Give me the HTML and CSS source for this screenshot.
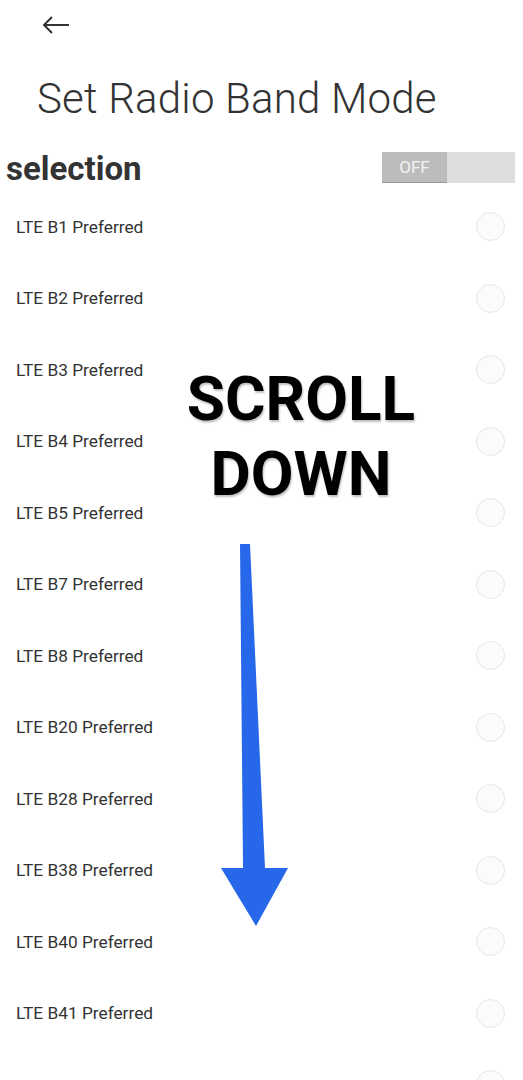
FILE: index.html
```html
<!DOCTYPE html>
<html>
<head>
<meta charset="utf-8">
<link rel="stylesheet" href="styles.css">
</head>
<body>
<div class="screen">
  <header class="topbar">
    <svg class="back" width="30" height="20" viewBox="0 0 30 20"><path d="M28 10H3M11 2L3 10l8 8" fill="none" stroke="#333" stroke-width="2"/></svg>
  </header>
  <h1 class="title">Set Radio Band Mode</h1>
  <div class="selrow">
    <span class="sel">selection</span>
    <div class="toggle"><span class="off">OFF</span><span class="rest"></span></div>
  </div>
  <ul class="list">
    <li class="row"><span>LTE B1 Preferred</span><i class="radio"></i></li>
    <li class="row"><span>LTE B2 Preferred</span><i class="radio"></i></li>
    <li class="row"><span>LTE B3 Preferred</span><i class="radio"></i></li>
    <li class="row"><span>LTE B4 Preferred</span><i class="radio"></i></li>
    <li class="row"><span>LTE B5 Preferred</span><i class="radio"></i></li>
    <li class="row"><span>LTE B7 Preferred</span><i class="radio"></i></li>
    <li class="row"><span>LTE B8 Preferred</span><i class="radio"></i></li>
    <li class="row"><span>LTE B20 Preferred</span><i class="radio"></i></li>
    <li class="row"><span>LTE B28 Preferred</span><i class="radio"></i></li>
    <li class="row"><span>LTE B38 Preferred</span><i class="radio"></i></li>
    <li class="row"><span>LTE B40 Preferred</span><i class="radio"></i></li>
    <li class="row"><span>LTE B41 Preferred</span><i class="radio"></i></li>
    <li class="row"><span></span><i class="radio"></i></li>
  </ul>
  <div class="scroll">SCROLL<br>DOWN</div>
  <svg class="arrow" width="523" height="1080" viewBox="0 0 523 1080"><path d="M240 544L250 544L265 868L288 868L256 926L221 868L243 868Z" fill="#2767e9"/></svg>
</div>
</body>
</html>
```
FILE: styles.css
```css
html, body { margin: 0; padding: 0; background: #fff; }
.screen { position: relative; width: 523px; height: 1080px; overflow: hidden; font-family: Roboto, "Noto Sans", sans-serif; color: #333; }
.topbar { height: 50px; display: flex; align-items: center; padding-left: 41px; }
.back { display: block; }
.title { margin: 19px 0 0 37px; font-size: 42px; font-weight: 300; line-height: 60px; color: #333; letter-spacing: 0.2px; }
.selrow { height: 46px; display: flex; align-items: center; justify-content: space-between; padding: 0 8px 0 6px; margin-top: 16px; }
.sel { font-size: 33px; font-weight: 700; color: #333; }
.toggle { display: flex; width: 133px; height: 31px; background: #dedede; margin-top: -2px; }
.off { width: 65px; background: #bcbcbc; color: #f4f4f4; font-size: 17px; display: flex; align-items: center; justify-content: center; border-bottom: 1px solid #999; box-sizing: border-box; }
.list { list-style: none; margin: 0; padding: 0; }
.row { height: 71.5px; display: flex; align-items: center; justify-content: space-between; padding: 0 18px 0 16px; font-size: 17.3px; color: #333; }
.radio { width: 29px; height: 29px; border: 1.5px solid #e6e6e6; border-radius: 50%; background: #fbfbfb; box-sizing: border-box; }
.scroll { position: absolute; left: 150px; width: 302px; top: 361px; text-align: center; font-size: 62px; font-weight: 700; line-height: 75px; color: #000; text-shadow: 1px 2px 2px rgba(0,0,0,0.25); }
.arrow { position: absolute; left: 0; top: 0; }
```
